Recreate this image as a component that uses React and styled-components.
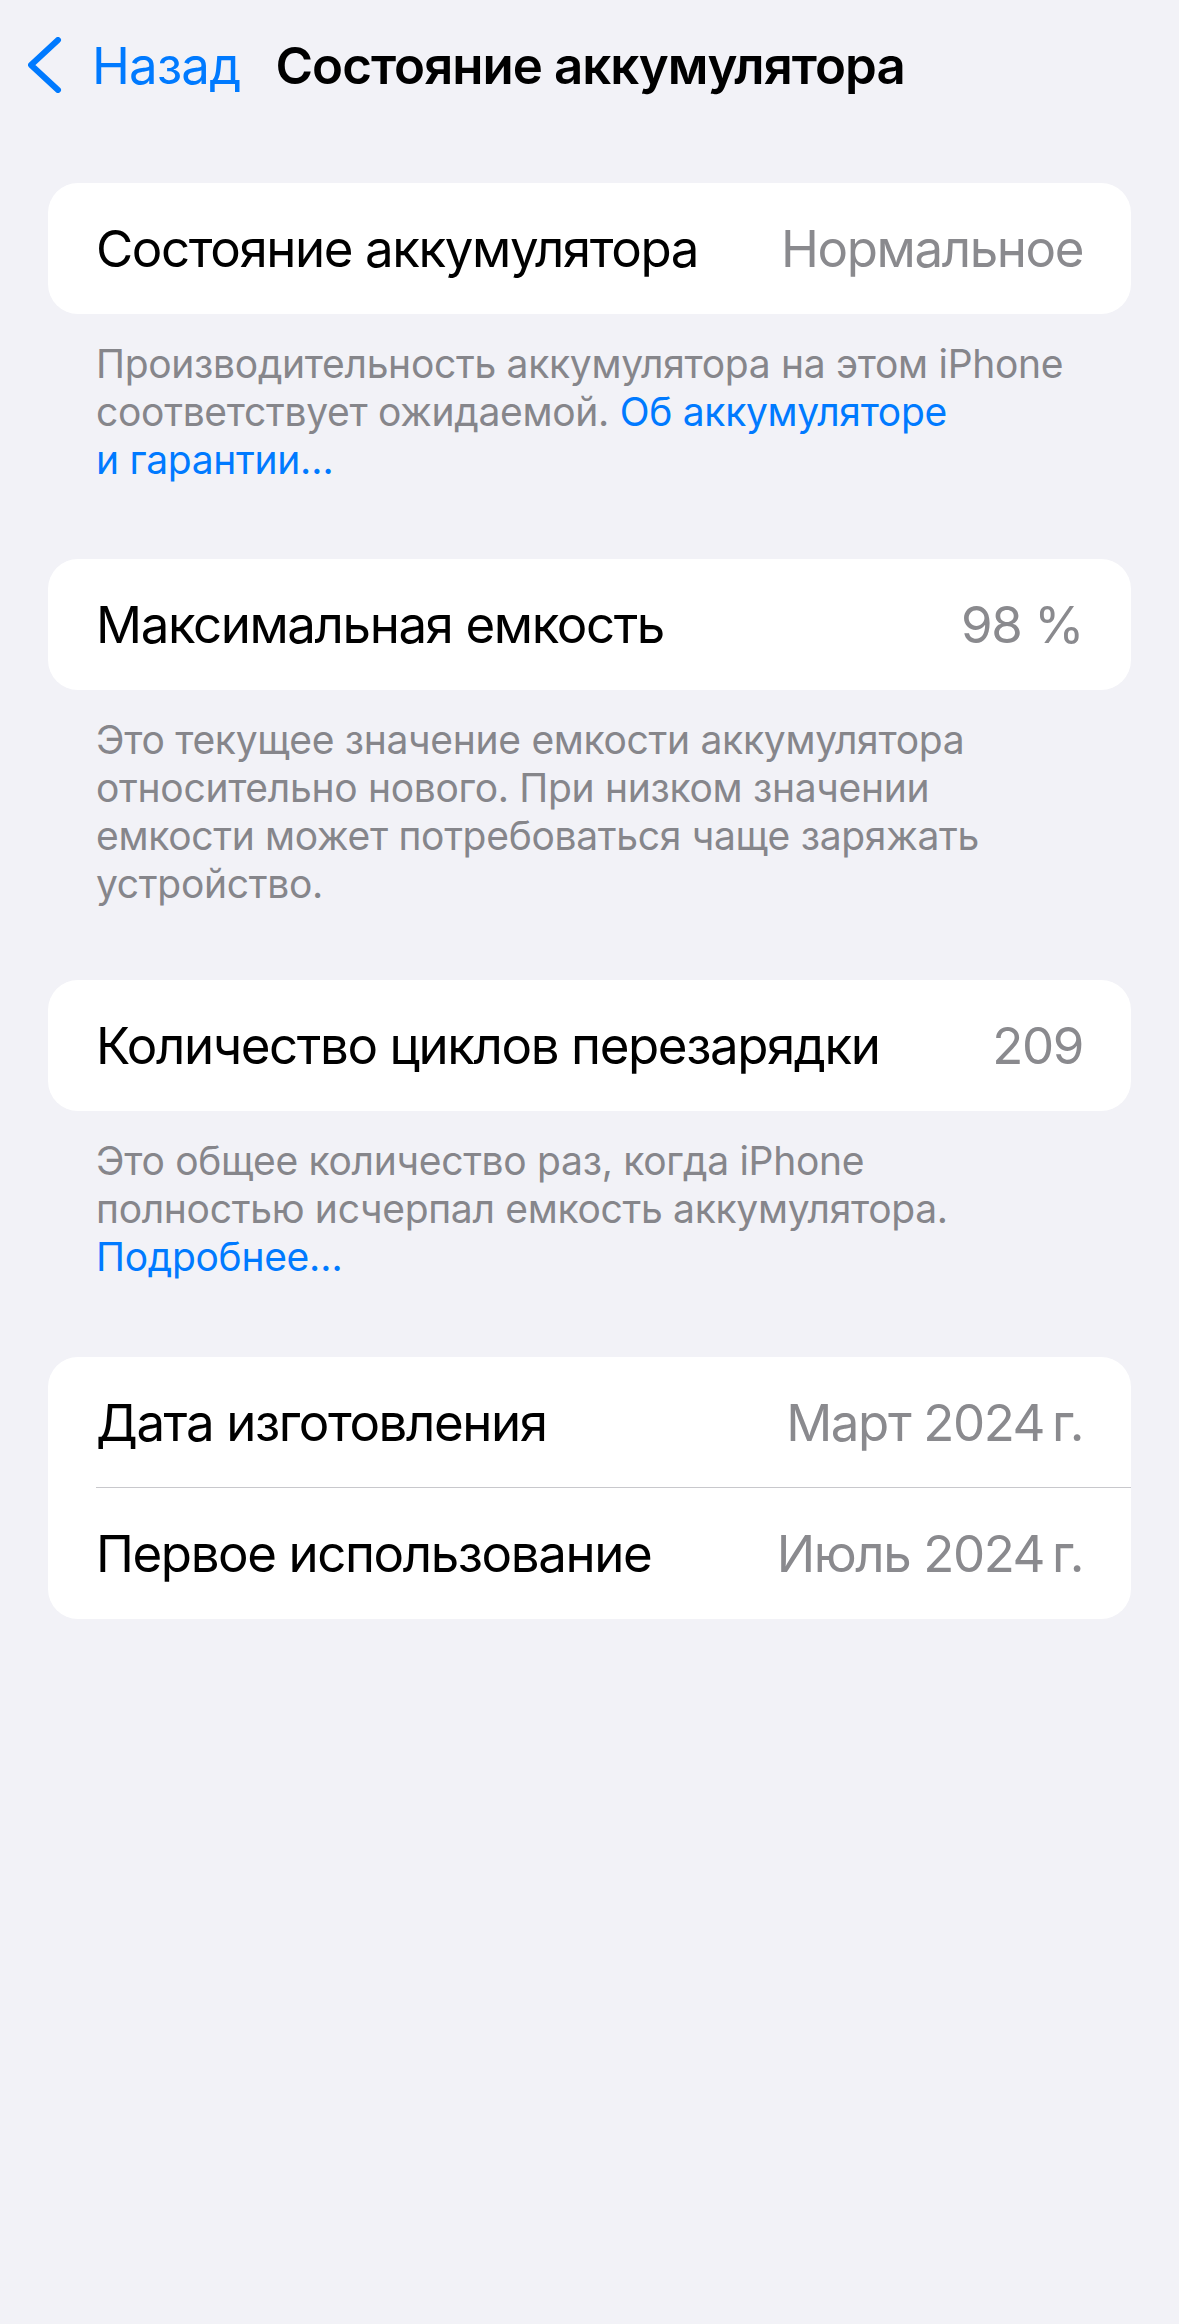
import React from 'react'
import styled, { createGlobalStyle } from 'styled-components'

const colors = {
  background: '#f2f2f7',
  card: '#ffffff',
  label: '#000000',
  secondary: '#8a8a8e',
  footer: '#86868b',
  link: '#007aff',
  separator: '#c8c8cc',
}

const GlobalStyle = createGlobalStyle`
  html, body {
    margin: 0;
    padding: 0;
    background: ${colors.background};
  }
  body {
    font-family: Inter, "Noto Sans", "Liberation Sans", sans-serif;
    -webkit-font-smoothing: antialiased;
  }
`

const Page = styled.div`
  min-height: 2324px;
  background: ${colors.background};
`

const NavBar = styled.header`
  display: flex;
  align-items: center;
  height: 130px;
  padding-left: 28px;
`

const BackButton = styled.button`
  display: flex;
  align-items: center;
  gap: 30px;
  padding: 0;
  border: none;
  background: none;
  color: ${colors.link};
  font-family: inherit;
  font-size: 51px;
  letter-spacing: -0.8px;
  cursor: pointer;
`

const NavTitle = styled.h1`
  margin: 0 0 0 35px;
  font-size: 51px;
  font-weight: 600;
  letter-spacing: -0.95px;
  color: ${colors.label};
`

const Content = styled.main`
  padding: 53px 48px 0;
`

const Card = styled.section`
  background: ${colors.card};
  border-radius: 30px;
  overflow: hidden;
`

const Row = styled.div`
  display: flex;
  align-items: center;
  justify-content: space-between;
  height: ${(p) => p.$height || 131}px;
  padding: 0 48px;
  font-size: 51px;
  letter-spacing: -1.4px;
  white-space: nowrap;
`

const Label = styled.span`
  color: ${colors.label};
`

const Value = styled.span`
  color: ${colors.secondary};
`

const Divider = styled.div`
  height: 1px;
  margin-left: 48px;
  background: ${colors.separator};
`

const Footer = styled.p`
  margin: 0;
  padding: 26px 48px ${(p) => p.$bottom}px;
  font-size: 39px;
  line-height: 48px;
  letter-spacing: -0.3px;
  color: ${colors.footer};
  white-space: nowrap;
`

const Link = styled.a`
  color: ${colors.link};
  text-decoration: none;
`

const Chevron = () => (
  <svg width="34" height="56" viewBox="0 0 34 56" fill="none">
    <polyline
      points="30,3 3,28 30,53"
      stroke={colors.link}
      strokeWidth="6"
      strokeLinecap="round"
      strokeLinejoin="round"
    />
  </svg>
)

const App = () => (
  <>
    <GlobalStyle />
    <Page>
      <NavBar>
        <BackButton>
          <Chevron />
          Назад
        </BackButton>
        <NavTitle>Состояние аккумулятора</NavTitle>
      </NavBar>

      <Content>
        <Card>
          <Row>
            <Label>Состояние аккумулятора</Label>
            <Value>Нормальное</Value>
          </Row>
        </Card>
        <Footer $bottom={75}>
          Производительность аккумулятора на этом iPhone
          <br />
          соответствует ожидаемой. <Link>Об аккумуляторе</Link>
          <br />
          <Link>и гарантии…</Link>
        </Footer>

        <Card>
          <Row>
            <Label>Максимальная емкость</Label>
            <Value>98 %</Value>
          </Row>
        </Card>
        <Footer $bottom={72}>
          Это текущее значение емкости аккумулятора
          <br />
          относительно нового. При низком значении
          <br />
          емкости может потребоваться чаще заряжать
          <br />
          устройство.
        </Footer>

        <Card>
          <Row>
            <Label>Количество циклов перезарядки</Label>
            <Value>209</Value>
          </Row>
        </Card>
        <Footer $bottom={76}>
          Это общее количество раз, когда iPhone
          <br />
          полностью исчерпал емкость аккумулятора.
          <br />
          <Link>Подробнее…</Link>
        </Footer>

        <Card>
          <Row $height={130}>
            <Label>Дата изготовления</Label>
            <Value>Март 2024{'\u2009'}г.</Value>
          </Row>
          <Divider />
          <Row $height={131}>
            <Label>Первое использование</Label>
            <Value>Июль 2024{'\u2009'}г.</Value>
          </Row>
        </Card>
      </Content>
    </Page>
  </>
)

export default App
